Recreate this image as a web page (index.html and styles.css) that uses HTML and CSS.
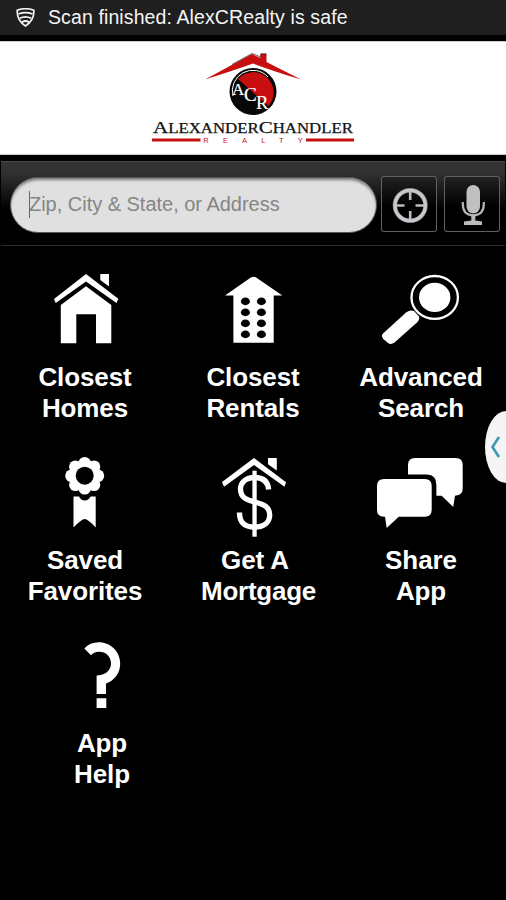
FILE: index.html
```html
<!DOCTYPE html>
<html lang="en">
<head>
<meta charset="utf-8">
<title>Alexander Chandler Realty</title>
<link rel="stylesheet" href="styles.css">
</head>
<body>
<div class="status">
  <svg class="shield" width="20" height="20" viewBox="16 7 20 20"><path d="M17.3 9.2Q25.5 6.200 33.800 9.200C34.300 17 31 21.500 25.500 25C20 21.500 16.700 17 17.300 9.200Z" fill="none" stroke="#f5f5f5" stroke-width="1.7"/><path d="M18.500 13Q25.500 10.300 32.500 13M19.800 17.300Q25.500 14.300 31.200 17.300M22 21.200Q25.500 18.800 29 21.200" fill="none" stroke="#f5f5f5" stroke-width="1.8"/></svg>
  <span>Scan finished: AlexCRealty is safe</span>
</div>
<header class="brand">
  <svg width="216" height="112" viewBox="145 42 216 112">
    <path d="M205 79.500L252 54 260.500 58V54H266.500V62L301 79.500Q270 70 253 63.500Q235 70 205 79.500Z" fill="#c80f10"/>
    <path d="M232 64.500L252 53.500 261 57V53.700H266.500" fill="none" stroke="#222" stroke-width=".7"/>
    <circle cx="253" cy="91.500" r="23.500" fill="#080808"/>
    <path d="M238 79A19.500 19.500 0 1 1 268.500 106Z" fill="#c80f10"/>
    <path d="M233 96A20.500 20.500 0 0 1 268 77" fill="none" stroke="#fff" stroke-width="1"/>
    <g class="mono"><text x="232" y="94.500" font-size="17">A</text><text x="244" y="101" font-size="19">C</text><text x="256" y="108.500" font-size="18.500">R</text></g>
    <text class="name" x="153" y="133.300" textLength="200" lengthAdjust="spacingAndGlyphs"><tspan font-size="17.500">A</tspan>LEXANDER<tspan font-size="17.500">C</tspan>HANDLER</text>
    <path d="M152 138.500H200.500V141.600H152ZM306 138.500H354V141.600H306Z" fill="#c80f10"/>
    <text class="realty" x="203.300" y="142.500" textLength="99.500">REALTY</text>
  </svg>
</header>
<div class="search">
  <div class="field"><i class="caret"></i><span>Zip, City &amp; State, or Address</span></div>
  <div class="btn"><svg width="56" height="56" viewBox="381 176 56 56"><circle cx="410.200" cy="205.500" r="15.300" fill="none" stroke="#bccbdc" stroke-width="4.500" opacity=".6"/><circle cx="410.200" cy="205.500" r="15.200" fill="none" stroke="#c9c9cb" stroke-width="3.300"/><path d="M410.200 191V200M410.200 211V220M395.500 205.500H404.500M415.500 205.500H424.500" stroke="#bdbdc0" stroke-width="2.600"/></svg></div>
  <div class="btn"><svg width="56" height="56" viewBox="444 176 56 56"><rect x="466.500" y="185" width="13.500" height="28.500" rx="6.700" fill="#c0c0c2"/><path d="M462.800 202V204Q462.800 215 473.200 215.300Q483.800 215 483.800 204V202" fill="none" stroke="#b4b4b6" stroke-width="2.200"/><path d="M471.300 215H475.300V220.500L482 221.500V225H464V221.500L471.300 220.500Z" fill="#bcbcbe"/></svg></div>
</div>
<main class="grid">
  <div class="tile">
    <svg width="168" height="100" viewBox="1 262 168 100"><path d="M86 274L118.300 298.700 116.500 303 86 281.500 55.700 303 54 299ZM100.300 274H109V286.500L100.300 280ZM86 286.300L111.300 305V343.300H96V314.200H76.300V343.300H60.800V305Z"/></svg>
    <span>Closest<br>Homes</span>
  </div>
  <div class="tile">
    <svg width="168" height="100" viewBox="169 262 168 100"><path d="M225 295.400L250.500 277.700Q253.500 276 256.500 277.700L282.300 295.400H273.700V342.700H233.400V295.400Z"/><g fill="#000"><ellipse cx="245.400" cy="301.400" rx="4.500" ry="3.800"/><ellipse cx="261.400" cy="301.400" rx="4.500" ry="3.800"/><ellipse cx="245.400" cy="312.400" rx="4.500" ry="3.800"/><ellipse cx="261.400" cy="312.400" rx="4.500" ry="3.800"/><ellipse cx="245.400" cy="323.400" rx="4.500" ry="3.800"/><ellipse cx="261.400" cy="323.400" rx="4.500" ry="3.800"/><ellipse cx="245.400" cy="334.400" rx="4.500" ry="3.800"/><ellipse cx="261.400" cy="334.400" rx="4.500" ry="3.800"/></g></svg>
    <span>Closest<br>Rentals</span>
  </div>
  <div class="tile">
    <svg width="168" height="100" viewBox="337 262 168 100"><ellipse cx="434.700" cy="297.400" rx="23.200" ry="21.400" fill="none" stroke="#fff" stroke-width="2.300"/><ellipse cx="434.700" cy="297.400" rx="15.700" ry="14.600"/><path d="M382.500 334L406 312.500Q410 309.500 414 311L419 316.500Q420 319.500 417 322.500L394.500 342.500Q391 345 388 343L382.800 338.500Q381 336 382.500 334Z"/></svg>
    <span>Advanced<br>Search</span>
  </div>
  <div class="tile">
    <svg width="168" height="100" viewBox="1 445 168 100"><circle cx="84.700" cy="475.700" r="15"/><g><circle cx="84.700" cy="463.200" r="6.300"/><circle cx="94" cy="466.700" r="6.300"/><circle cx="97.900" cy="475.700" r="6.300"/><circle cx="94" cy="484.700" r="6.300"/><circle cx="84.700" cy="488.300" r="6.300"/><circle cx="75.400" cy="484.700" r="6.300"/><circle cx="71.500" cy="475.700" r="6.300"/><circle cx="75.400" cy="466.700" r="6.300"/></g><circle cx="84.700" cy="475.700" r="9" fill="#000"/><path d="M73.500 496.600H79Q81 500.500 84.700 500.500Q88.500 500.500 90.500 496.600H95.700V527.500Q88 519 84.700 519Q81.500 519 73.500 527.500Z"/></svg>
    <span>Saved<br>Favorites</span>
  </div>
  <div class="tile">
    <svg width="168" height="100" viewBox="169 445 168 100"><path d="M254 458L286 482.300 284.500 486.800 254 465 224 486.800 222 482ZM268 458H276.800V470.500L268 464.300Z"/><path d="M252.400 470.700H256.700V536.700H252.400Z"/><path d="M268.600 489.500C268 481.500 263 477.500 254.500 477.500C246 477.500 240.500 482.500 240.500 489C240.500 498 247 499.800 255 502C264 504.500 269.700 507 269.700 515C269.700 523 263 527 254.500 527C244 527 239.500 522 239.500 512.500" fill="none" stroke="#fff" stroke-width="5.300"/></svg>
    <span class="get">Get A</span><span class="mortgage">Mortgage</span>
  </div>
  <div class="tile">
    <svg width="168" height="100" viewBox="337 445 168 100"><path d="M384 479H424.700Q431.700 479 431.700 486V509.700Q431.700 516.700 424.700 516.700H398.700L386.700 528 385 516.700H384Q377 516.700 377 509.700V486Q377 479 384 479Z"/><path d="M408 474.500V465Q408 458 415 458H455.700Q462.700 458 462.700 465V488.700Q462.700 495 455 495.700L453.200 507 441.700 495.700H436.400V485Q436.400 474.500 427 474.500Z"/></svg>
    <span>Share<br>App</span>
  </div>
  <div class="tile help">
    <svg width="168" height="100" viewBox="18 628 168 100"><path d="M84.300 648.500C88 644.500 93 642.300 98.700 642.300C111 642.300 120.200 652 120.200 663.500C120.200 673 114.500 680.500 106 683.500V694H96.600V675.500C105 675.500 111 670.500 111 663.500C111 656.500 106 651.800 99 651.800C95.500 651.800 93 653 91 655.200ZM96.600 698.300H106.300V708H96.600Z"/></svg>
    <span>App<br>Help</span>
  </div>
</main>
<div class="drawer"><svg width="21" height="72" viewBox="485 411 21 72"><path d="M499 437L492.500 447 499 457" fill="none" stroke="#4298b8" stroke-width="2.700"/></svg></div>
</body>
</html>
```

FILE: styles.css
```css
* { box-sizing: border-box; }
body {
  margin: 0;
  position: relative;
  height: 900px;
  overflow: hidden;
  background: #000;
  color: #fff;
  font-family: "Liberation Sans", Arial, sans-serif;
}
svg { display: block; flex: none; }
.status {
  height: 35px;
  padding-left: 16px;
  display: flex;
  align-items: center;
  gap: 12px;
  background: #1f1f1f;
  color: #f5f5f5;
  font-size: 19.5px;
  letter-spacing: 0.11px;
  white-space: nowrap;
}
.brand {
  height: 114px;
  margin-top: 6px;
  padding-left: 145px;
  background: #fff;
  border-top: 1px solid #ccc;
  border-bottom: 1px solid #ccc;
}
.mono { fill: #fff; stroke: #fff; stroke-width: 0.2px; font-family: "Liberation Serif", serif; }
.name { fill: #111; stroke: #111; stroke-width: 0.25px; font: 14px "Liberation Serif", serif; }
.realty { fill: #c80f10; font: 7.5px "Liberation Sans", sans-serif; }
.search {
  height: 85px;
  margin: 6px 1px 0;
  padding: 14px 4px 0 9px;
  display: flex;
  align-items: flex-start;
  border-top: 1px solid #484848;
  border-bottom: 1px solid #2c2c2c;
  background: linear-gradient(#343434 0, #303030 12px, #000 48px);
}
.field {
  width: 367px;
  height: 56px;
  margin-top: 1px;
  padding: 0 0 2px 18px;
  display: flex;
  align-items: center;
  border: 1px solid #555;
  border-radius: 28px;
  background: #e0e0e0;
  box-shadow: inset 0 3px 3px -1px #777;
  color: #858585;
  font-size: 20px;
  letter-spacing: -0.02px;
  white-space: nowrap;
}
.caret { width: 1px; height: 27px; margin-right: -1px; background: #666; }
.btn {
  width: 56px;
  height: 56px;
  margin-left: 4px;
  border-radius: 3px;
  background: linear-gradient(#222, #000 55%);
  box-shadow: inset 0 0 0 1px #606060;
}
.btn + .btn { margin-left: 7px; }
.grid {
  display: grid;
  grid-template-columns: repeat(3, 168px);
  grid-auto-rows: 183px;
  margin: 16px 0 0 1px;
}
.tile { text-align: center; font-size: 26px; line-height: 31px; font-weight: bold; letter-spacing: -0.1px; }
.tile svg { fill: #fff; }
.tile span { display: block; }
.tile .get { padding-left: 4px; }
.tile .mortgage { padding-left: 11px; letter-spacing: -0.25px; }
.help { margin-left: 17px; width: 168px; }
.drawer {
  position: absolute;
  left: 485px;
  top: 411px;
  width: 21px;
  height: 72px;
  overflow: hidden;
  background: #f5f5f5;
  border-radius: 21px 0 0 21px / 36px 0 0 36px;
}
```
